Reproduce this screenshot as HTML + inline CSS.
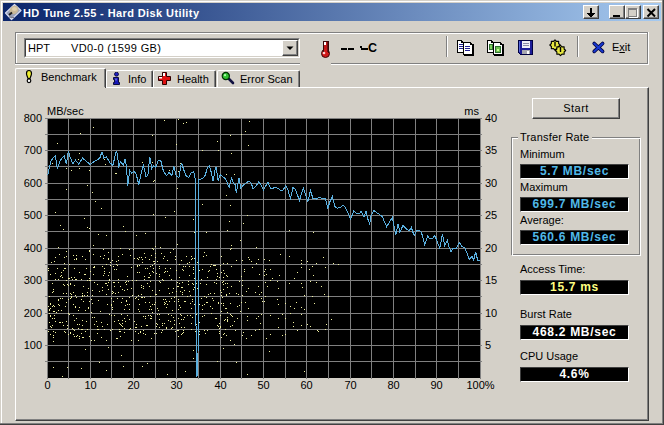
<!DOCTYPE html>
<html><head><meta charset="utf-8"><style>
html,body{margin:0;padding:0;}
body{width:664px;height:425px;overflow:hidden;position:relative;background:#D4D0C8;font-family:"Liberation Sans",sans-serif;font-size:11px;color:#000}
.t{position:absolute;white-space:pre;}
</style></head><body>
<div style="position:absolute;left:0px;top:0px;width:664px;height:425px;background:#D4D0C8;"></div><div style="position:absolute;left:1px;top:1px;width:661px;height:1px;background:#fff;"></div><div style="position:absolute;left:1px;top:1px;width:1px;height:422px;background:#fff;"></div><div style="position:absolute;left:662px;top:0px;width:1px;height:424px;background:#808080;"></div><div style="position:absolute;left:0px;top:423px;width:663px;height:1px;background:#808080;"></div><div style="position:absolute;left:663px;top:0px;width:1px;height:425px;background:#404040;"></div><div style="position:absolute;left:0px;top:424px;width:664px;height:1px;background:#404040;"></div><div style="position:absolute;left:3px;top:3px;width:658px;height:18px;background:linear-gradient(to right,#0A246A,#A6CAF0);"></div><div class="t" style="left:23px;top:4px;color:#fff;font-weight:bold;letter-spacing:0.4px;line-height:18px">HD Tune 2.55 - Hard Disk Utility</div><div style="position:absolute;left:583px;top:5px;width:16px;height:14px;background:#D4D0C8;box-sizing:border-box;border-top:1px solid #fff;border-left:1px solid #fff;border-right:1px solid #404040;border-bottom:1px solid #404040;"><div style="position:absolute;left:0;top:0;right:0;bottom:0;border-right:1px solid #808080;border-bottom:1px solid #808080;"></div><svg style="position:absolute;left:0;top:0" width="16" height="14" shape-rendering="crispEdges"><rect x="6" y="2" width="2" height="9" fill="#000"/><rect x="3" y="7" width="8" height="1" fill="#000"/><rect x="4" y="8" width="6" height="1" fill="#000"/><rect x="5" y="9" width="4" height="1" fill="#000"/></svg></div><div style="position:absolute;left:609px;top:5px;width:16px;height:14px;background:#D4D0C8;box-sizing:border-box;border-top:1px solid #fff;border-left:1px solid #fff;border-right:1px solid #404040;border-bottom:1px solid #404040;"><div style="position:absolute;left:0;top:0;right:0;bottom:0;border-right:1px solid #808080;border-bottom:1px solid #808080;"></div><svg style="position:absolute;left:0;top:0" width="16" height="14" shape-rendering="crispEdges"><rect x="3" y="9" width="7" height="2" fill="#000"/></svg></div><div style="position:absolute;left:625px;top:5px;width:16px;height:14px;background:#D4D0C8;box-sizing:border-box;border-top:1px solid #fff;border-left:1px solid #fff;border-right:1px solid #404040;border-bottom:1px solid #404040;"><div style="position:absolute;left:0;top:0;right:0;bottom:0;border-right:1px solid #808080;border-bottom:1px solid #808080;"></div><svg style="position:absolute;left:0;top:0" width="16" height="14" shape-rendering="crispEdges"><rect x="11" y="3" width="1" height="9" fill="#fff"/><rect x="3" y="11" width="9" height="1" fill="#fff"/><rect x="2.5" y="2.5" width="8" height="8" fill="none" stroke="#808080"/><rect x="3" y="3" width="7" height="1" fill="#808080"/></svg></div><div style="position:absolute;left:643px;top:5px;width:16px;height:14px;background:#D4D0C8;box-sizing:border-box;border-top:1px solid #fff;border-left:1px solid #fff;border-right:1px solid #404040;border-bottom:1px solid #404040;"><div style="position:absolute;left:0;top:0;right:0;bottom:0;border-right:1px solid #808080;border-bottom:1px solid #808080;"></div><svg style="position:absolute;left:0;top:0" width="16" height="14"><path d="M3.5 3 L11 10.5 M11 3 L3.5 10.5" stroke="#000" stroke-width="2"/></svg></div><svg style="position:absolute;left:0px;top:0px" width="24" height="22">
<path d="M5.5 13 L14.5 4.5 L21 10.5 L11.5 19.5 Z" fill="#98a0b8" stroke="#d8dcf0" stroke-width="1.2" stroke-linejoin="round"/>
<ellipse cx="14" cy="10" rx="4.8" ry="3.8" transform="rotate(-40 14 10)" fill="#c8b898"/>
<ellipse cx="14.5" cy="9" rx="2.5" ry="2" fill="#e0d0b0"/>
<path d="M9 15 L12 12.5" stroke="#202020" stroke-width="2"/>
<path d="M9 17 L14 17.5" stroke="#707080" stroke-width="1"/>
</svg><div style="position:absolute;left:15px;top:32px;width:633px;height:1px;background:#808080;"></div><div style="position:absolute;left:16px;top:33px;width:633px;height:1px;background:#fff;"></div><div style="position:absolute;left:15px;top:32px;width:1px;height:32px;background:#808080;"></div><div style="position:absolute;left:16px;top:33px;width:1px;height:31px;background:#fff;"></div><div style="position:absolute;left:647px;top:32px;width:1px;height:32px;background:#808080;"></div><div style="position:absolute;left:648px;top:32px;width:1px;height:33px;background:#fff;"></div><div style="position:absolute;left:15px;top:63px;width:285px;height:1px;background:#808080;"></div><div style="position:absolute;left:15px;top:64px;width:285px;height:1px;background:#fff;"></div><div style="position:absolute;left:331px;top:63px;width:317px;height:1px;background:#808080;"></div><div style="position:absolute;left:331px;top:64px;width:318px;height:1px;background:#fff;"></div><div style="position:absolute;left:24px;top:38px;width:276px;height:20px;background:#fff;box-sizing:border-box;border-top:1px solid #808080;border-left:1px solid #808080;border-right:1px solid #fff;border-bottom:1px solid #fff"></div><div style="position:absolute;left:25px;top:39px;width:274px;height:18px;background:transparent;box-sizing:border-box;border-top:1px solid #404040;border-left:1px solid #404040;border-right:1px solid #D4D0C8;border-bottom:1px solid #D4D0C8"></div><div class="t" style="left:28px;top:39px;line-height:18px">HPT</div><div class="t" style="left:71px;top:39px;line-height:18px;letter-spacing:0.35px">VD0-0 (1599 GB)</div><div style="position:absolute;left:282px;top:40px;width:16px;height:16px;background:#D4D0C8;box-sizing:border-box;border-top:1px solid #fff;border-left:1px solid #fff;border-right:1px solid #404040;border-bottom:1px solid #404040"><div style="position:absolute;left:0;top:0;right:0;bottom:0;border-right:1px solid #808080;border-bottom:1px solid #808080"></div><svg style="position:absolute;left:0;top:0" width="16" height="16"><path d="M3.5 5.5 L10.5 5.5 L7 9 Z" fill="#000"/></svg></div><svg style="position:absolute;left:318px;top:38px" width="16" height="22">
<circle cx="7.5" cy="15.5" r="4" fill="#d01818" stroke="#3a0808"/>
<rect x="5.5" y="3.5" width="5" height="11" fill="#c01818" stroke="#3a0808"/>
<rect x="6" y="11" width="4" height="5" fill="#d01818"/>
<rect x="6" y="4" width="2" height="3" fill="#fff"/>
<rect x="9" y="4" width="1" height="10" fill="#701010"/>
<circle cx="6" cy="15" r="1.3" fill="#ffd0d0"/>
</svg><svg style="position:absolute;left:338px;top:40px" width="44" height="16">
<rect x="3" y="8" width="6" height="2" fill="#000"/><rect x="10" y="8" width="6" height="2" fill="#000"/>
<rect x="22" y="6" width="2" height="2" fill="#000"/><rect x="23" y="8" width="7" height="2" fill="#000"/>
</svg><div class="t" style="left:368px;top:38px;font-weight:bold;font-size:12.5px;line-height:20px">C</div><div style="position:absolute;left:446px;top:36px;width:1px;height:21px;background:#808080;"></div><div style="position:absolute;left:447px;top:36px;width:1px;height:21px;background:#fff;"></div><div style="position:absolute;left:577px;top:36px;width:1px;height:21px;background:#808080;"></div><div style="position:absolute;left:578px;top:36px;width:1px;height:21px;background:#fff;"></div><svg style="position:absolute;left:456px;top:39px" width="20" height="18" shape-rendering="crispEdges"><path d="M1.5 1.5 H5.5 L7.5 3.5 V13.5 H1.5 Z" fill="#fff" stroke="#000"/><path d="M5.5 1.5 V3.5 H7.5" fill="none" stroke="#000"/><rect x="3" y="5" width="4" height="1" fill="#202090"/><rect x="3" y="7" width="4" height="1" fill="#202090"/><rect x="3" y="9" width="4" height="1" fill="#202090"/><path d="M7.5 3.5 H14.5 L16.5 5.5 V15.5 H7.5 Z" fill="#fff" stroke="#000"/><path d="M14.5 3.5 V5.5 H16.5" fill="none" stroke="#000"/><rect x="9" y="7" width="5" height="1" fill="#202090"/><rect x="9" y="9" width="5" height="1" fill="#202090"/><rect x="9" y="11" width="5" height="1" fill="#202090"/><rect x="17" y="5" width="1" height="11" fill="#000"/><rect x="8" y="16" width="10" height="1" fill="#000"/></svg><svg style="position:absolute;left:486px;top:39px" width="20" height="18" shape-rendering="crispEdges"><path d="M1.5 1.5 H5.5 L7.5 3.5 V13.5 H1.5 Z" fill="#fff" stroke="#000"/><path d="M5.5 1.5 V3.5 H7.5" fill="none" stroke="#000"/><rect x="3" y="5" width="4" height="6" fill="#307030"/><rect x="4" y="6" width="2" height="4" fill="#80d060"/><path d="M7.5 3.5 H14.5 L16.5 5.5 V15.5 H7.5 Z" fill="#fff" stroke="#000"/><path d="M14.5 3.5 V5.5 H16.5" fill="none" stroke="#000"/><rect x="9" y="7" width="6" height="7" fill="#307030"/><rect x="10" y="8" width="4" height="5" fill="#70c050"/><rect x="11" y="10" width="2" height="2" fill="#c0ff90"/><rect x="17" y="5" width="1" height="11" fill="#000"/><rect x="8" y="16" width="10" height="1" fill="#000"/></svg><svg style="position:absolute;left:517px;top:39px" width="18" height="18" shape-rendering="crispEdges">
<path d="M1.5 1.5 H15.5 V15.5 H3.5 L1.5 13.5 Z" fill="#1c1c98" stroke="#000040"/>
<rect x="2" y="2" width="1" height="11" fill="#5868d8"/>
<rect x="5" y="2" width="8" height="7" fill="#eeeef8"/>
<rect x="6" y="4" width="6" height="1" fill="#8888a8"/><rect x="6" y="6" width="6" height="1" fill="#8888a8"/>
<rect x="5" y="11" width="8" height="4" fill="#a8a8b0"/><rect x="10" y="12" width="2" height="3" fill="#fff"/>
</svg><svg style="position:absolute;left:548px;top:39px" width="20" height="18">
<path d="M12.20,6.00 L10.60,7.49 L10.68,9.68 L8.49,9.60 L7.00,11.20 L5.51,9.60 L3.32,9.68 L3.40,7.49 L1.80,6.00 L3.40,4.51 L3.32,2.32 L5.51,2.40 L7.00,0.80 L8.49,2.40 L10.68,2.32 L10.60,4.51 Z" fill="#e8e840" stroke="#000" stroke-width="1.1" stroke-linejoin="round"/>
<path d="M7 2.5 V7.5" stroke="#000" stroke-width="1.4"/>
<path d="M17.70,11.50 L16.10,12.99 L16.18,15.18 L13.99,15.10 L12.50,16.70 L11.01,15.10 L8.82,15.18 L8.90,12.99 L7.30,11.50 L8.90,10.01 L8.82,7.82 L11.01,7.90 L12.50,6.30 L13.99,7.90 L16.18,7.82 L16.10,10.01 Z" fill="#e8e840" stroke="#000" stroke-width="1.1" stroke-linejoin="round"/>
<path d="M12.5 8 V13" stroke="#000" stroke-width="1.4"/>
</svg><svg style="position:absolute;left:590px;top:40px" width="16" height="15">
<path d="M4.2 3.5 L12.6 11.4 M12.6 3.5 L4.2 11.4" stroke="#000040" stroke-width="3.6" stroke-linecap="round"/>
<path d="M4.2 3.5 L12.6 11.4 M12.6 3.5 L4.2 11.4" stroke="#1838d0" stroke-width="2" stroke-linecap="round"/>
</svg><div class="t" style="left:612px;top:40px;line-height:14px">E<span style="text-decoration:underline">x</span>it</div><div style="position:absolute;left:15px;top:87px;width:634px;height:334px;background:#D4D0C8;box-sizing:border-box;border-top:1px solid #fff;border-left:1px solid #fff;border-right:1px solid #404040;border-bottom:1px solid #404040"></div><div style="position:absolute;left:16px;top:88px;width:632px;height:332px;background:transparent;box-sizing:border-box;border-right:1px solid #808080;border-bottom:1px solid #808080"></div><div style="position:absolute;left:106px;top:70px;width:47px;height:17px;background:#D4D0C8;box-sizing:border-box;border-top:1px solid #fff;border-left:1px solid #fff;border-right:1px solid #404040;border-top-left-radius:2px;border-top-right-radius:2px"></div><div style="position:absolute;left:151px;top:71px;width:1px;height:16px;background:#808080;"></div><div style="position:absolute;left:153px;top:70px;width:63px;height:17px;background:#D4D0C8;box-sizing:border-box;border-top:1px solid #fff;border-left:1px solid #fff;border-right:1px solid #404040;border-top-left-radius:2px;border-top-right-radius:2px"></div><div style="position:absolute;left:214px;top:71px;width:1px;height:16px;background:#808080;"></div><div style="position:absolute;left:217px;top:70px;width:83px;height:17px;background:#D4D0C8;box-sizing:border-box;border-top:1px solid #fff;border-left:1px solid #fff;border-right:1px solid #404040;border-top-left-radius:2px;border-top-right-radius:2px"></div><div style="position:absolute;left:298px;top:71px;width:1px;height:16px;background:#808080;"></div><div style="position:absolute;left:15px;top:68px;width:91px;height:20px;background:#D4D0C8;box-sizing:border-box;border-top:1px solid #fff;border-left:1px solid #fff;border-right:1px solid #404040;border-top-left-radius:2px;border-top-right-radius:2px"></div><div style="position:absolute;left:104px;top:69px;width:1px;height:19px;background:#808080;"></div><div style="position:absolute;left:16px;top:87px;width:89px;height:1px;background:#D4D0C8;"></div><div class="t" style="left:41px;top:71px;line-height:13px">Benchmark</div><div class="t" style="left:128px;top:73px;line-height:13px">Info</div><div class="t" style="left:177px;top:73px;line-height:13px">Health</div><div class="t" style="left:240px;top:73px;line-height:13px">Error Scan</div><svg style="position:absolute;left:24px;top:69px" width="10" height="15">
<path d="M5 1.5 C7 1.5 7.5 3 7.5 4.5 C7.5 6.5 6.5 7.5 6 9.5 H4 C3.5 7.5 2.5 6.5 2.5 4.5 C2.5 3 3 1.5 5 1.5 Z" fill="#f0f030" stroke="#000" stroke-width="1.2"/>
<circle cx="5" cy="11.8" r="1.8" fill="#fff" stroke="#000" stroke-width="1.2"/>
</svg><svg style="position:absolute;left:112px;top:72px" width="10" height="14">
<circle cx="4.5" cy="2.2" r="2" fill="#2020c0" stroke="#000030" stroke-width="0.8"/>
<path d="M1.5 5.5 H6.5 V10.5 H7.5 V12.5 H1.5 V10.5 H2.5 V7.5 H1.5 Z" fill="#1818b8" stroke="#000030" stroke-width="0.9"/>
<rect x="3.5" y="6.5" width="1" height="2" fill="#a0a0ff"/>
</svg><svg style="position:absolute;left:158px;top:72px" width="14" height="14">
<path d="M4.5 0.5 H8.5 V4.5 H12.5 V8.5 H8.5 V12.5 H4.5 V8.5 H0.5 V4.5 H4.5 Z" fill="#e01010" stroke="#300000"/>
<rect x="5" y="1" width="2" height="3" fill="#fff"/><rect x="1" y="5" width="3" height="1.5" fill="#fff"/>
</svg><svg style="position:absolute;left:221px;top:71px" width="15" height="15">
<path d="M6.5 6.5 L12 12" stroke="#101040" stroke-width="2.6" stroke-linecap="round"/>
<circle cx="4.8" cy="5" r="3.6" fill="#30c030" stroke="#003000" stroke-width="1.2"/>
<circle cx="4" cy="4.2" r="1.1" fill="#b0ffb0"/>
</svg><svg style="position:absolute;left:0;top:0" width="664" height="425"><rect x="47" y="118" width="433" height="260" fill="#000" shape-rendering="crispEdges"/><g fill="#808080" shape-rendering="crispEdges"><rect x="45" y="118" width="437" height="1"/><rect x="45" y="134" width="437" height="1"/><rect x="45" y="150" width="437" height="1"/><rect x="45" y="166" width="437" height="1"/><rect x="45" y="183" width="437" height="1"/><rect x="45" y="199" width="437" height="1"/><rect x="45" y="215" width="437" height="1"/><rect x="45" y="231" width="437" height="1"/><rect x="45" y="248" width="437" height="1"/><rect x="45" y="264" width="437" height="1"/><rect x="45" y="280" width="437" height="1"/><rect x="45" y="296" width="437" height="1"/><rect x="45" y="313" width="437" height="1"/><rect x="45" y="329" width="437" height="1"/><rect x="45" y="345" width="437" height="1"/><rect x="45" y="361" width="437" height="1"/><rect x="47" y="118" width="1" height="261"/><rect x="68" y="118" width="1" height="261"/><rect x="90" y="118" width="1" height="261"/><rect x="111" y="118" width="1" height="261"/><rect x="133" y="118" width="1" height="261"/><rect x="155" y="118" width="1" height="261"/><rect x="176" y="118" width="1" height="261"/><rect x="198" y="118" width="1" height="261"/><rect x="220" y="118" width="1" height="261"/><rect x="241" y="118" width="1" height="261"/><rect x="263" y="118" width="1" height="261"/><rect x="285" y="118" width="1" height="261"/><rect x="306" y="118" width="1" height="261"/><rect x="328" y="118" width="1" height="261"/><rect x="350" y="118" width="1" height="261"/><rect x="371" y="118" width="1" height="261"/><rect x="393" y="118" width="1" height="261"/><rect x="415" y="118" width="1" height="261"/><rect x="436" y="118" width="1" height="261"/><rect x="458" y="118" width="1" height="261"/><rect x="480" y="118" width="1" height="261"/></g><g fill="#F0F0A0" shape-rendering="crispEdges"><rect x="178" y="119" width="1" height="1"/><rect x="164" y="120" width="1" height="1"/><rect x="249" y="121" width="1" height="1"/><rect x="186" y="122" width="1" height="1"/><rect x="183" y="123" width="1" height="1"/><rect x="93" y="127" width="1" height="1"/><rect x="245" y="131" width="1" height="1"/><rect x="80" y="133" width="1" height="1"/><rect x="241" y="134" width="1" height="1"/><rect x="152" y="135" width="1" height="1"/><rect x="230" y="135" width="1" height="1"/><rect x="217" y="141" width="1" height="1"/><rect x="57" y="143" width="1" height="1"/><rect x="176" y="144" width="1" height="1"/><rect x="248" y="145" width="1" height="1"/><rect x="202" y="150" width="1" height="1"/><rect x="218" y="150" width="1" height="1"/><rect x="79" y="153" width="1" height="1"/><rect x="231" y="153" width="1" height="1"/><rect x="52" y="159" width="1" height="1"/><rect x="78" y="159" width="1" height="1"/><rect x="104" y="159" width="1" height="1"/><rect x="142" y="162" width="1" height="1"/><rect x="152" y="162" width="1" height="1"/><rect x="52" y="163" width="1" height="1"/><rect x="180" y="163" width="1" height="1"/><rect x="105" y="164" width="1" height="1"/><rect x="66" y="168" width="1" height="1"/><rect x="79" y="168" width="1" height="1"/><rect x="71" y="170" width="1" height="1"/><rect x="89" y="170" width="1" height="1"/><rect x="169" y="170" width="1" height="1"/><rect x="178" y="171" width="1" height="1"/><rect x="115" y="173" width="1" height="1"/><rect x="116" y="173" width="1" height="1"/><rect x="226" y="174" width="1" height="1"/><rect x="234" y="174" width="1" height="1"/><rect x="127" y="177" width="1" height="1"/><rect x="154" y="180" width="1" height="1"/><rect x="153" y="181" width="1" height="1"/><rect x="87" y="185" width="1" height="1"/><rect x="177" y="188" width="1" height="1"/><rect x="66" y="189" width="1" height="1"/><rect x="92" y="192" width="1" height="1"/><rect x="226" y="195" width="1" height="1"/><rect x="95" y="201" width="1" height="1"/><rect x="202" y="204" width="1" height="1"/><rect x="230" y="205" width="1" height="1"/><rect x="101" y="208" width="1" height="1"/><rect x="174" y="211" width="1" height="1"/><rect x="55" y="212" width="1" height="1"/><rect x="153" y="214" width="1" height="1"/><rect x="247" y="215" width="1" height="1"/><rect x="165" y="217" width="1" height="1"/><rect x="84" y="218" width="1" height="1"/><rect x="193" y="219" width="1" height="1"/><rect x="229" y="221" width="1" height="1"/><rect x="243" y="223" width="1" height="1"/><rect x="60" y="225" width="1" height="1"/><rect x="123" y="226" width="1" height="1"/><rect x="87" y="227" width="1" height="1"/><rect x="89" y="228" width="1" height="1"/><rect x="63" y="229" width="1" height="1"/><rect x="227" y="230" width="1" height="1"/><rect x="289" y="230" width="1" height="1"/><rect x="125" y="231" width="1" height="1"/><rect x="194" y="232" width="1" height="1"/><rect x="206" y="232" width="1" height="1"/><rect x="313" y="232" width="1" height="1"/><rect x="145" y="233" width="1" height="1"/><rect x="98" y="234" width="1" height="1"/><rect x="106" y="235" width="1" height="1"/><rect x="136" y="235" width="1" height="1"/><rect x="240" y="240" width="1" height="1"/><rect x="177" y="244" width="1" height="1"/><rect x="93" y="245" width="1" height="1"/><rect x="231" y="245" width="1" height="1"/><rect x="155" y="246" width="1" height="1"/><rect x="58" y="247" width="1" height="1"/><rect x="160" y="247" width="1" height="1"/><rect x="256" y="247" width="1" height="1"/><rect x="120" y="248" width="1" height="1"/><rect x="152" y="248" width="1" height="1"/><rect x="195" y="248" width="1" height="1"/><rect x="231" y="248" width="1" height="1"/><rect x="103" y="249" width="1" height="1"/><rect x="129" y="249" width="1" height="1"/><rect x="133" y="249" width="1" height="1"/><rect x="153" y="249" width="1" height="1"/><rect x="173" y="249" width="1" height="1"/><rect x="230" y="249" width="1" height="1"/><rect x="89" y="250" width="1" height="1"/><rect x="66" y="251" width="1" height="1"/><rect x="89" y="251" width="1" height="1"/><rect x="108" y="252" width="1" height="1"/><rect x="170" y="252" width="1" height="1"/><rect x="204" y="252" width="1" height="1"/><rect x="144" y="253" width="1" height="1"/><rect x="155" y="253" width="1" height="1"/><rect x="161" y="253" width="1" height="1"/><rect x="59" y="254" width="1" height="1"/><rect x="93" y="254" width="1" height="1"/><rect x="122" y="254" width="1" height="1"/><rect x="280" y="254" width="1" height="1"/><rect x="73" y="255" width="1" height="1"/><rect x="76" y="255" width="1" height="1"/><rect x="104" y="255" width="1" height="1"/><rect x="130" y="255" width="1" height="1"/><rect x="151" y="255" width="1" height="1"/><rect x="206" y="255" width="1" height="1"/><rect x="66" y="256" width="1" height="1"/><rect x="82" y="256" width="1" height="1"/><rect x="100" y="256" width="1" height="1"/><rect x="118" y="256" width="1" height="1"/><rect x="164" y="256" width="1" height="1"/><rect x="175" y="256" width="1" height="1"/><rect x="186" y="256" width="1" height="1"/><rect x="191" y="256" width="1" height="1"/><rect x="203" y="256" width="1" height="1"/><rect x="221" y="256" width="1" height="1"/><rect x="289" y="256" width="1" height="1"/><rect x="55" y="257" width="1" height="1"/><rect x="64" y="257" width="1" height="1"/><rect x="139" y="257" width="1" height="1"/><rect x="141" y="257" width="1" height="1"/><rect x="145" y="257" width="1" height="1"/><rect x="155" y="257" width="1" height="1"/><rect x="198" y="257" width="1" height="1"/><rect x="248" y="257" width="1" height="1"/><rect x="323" y="257" width="1" height="1"/><rect x="76" y="258" width="1" height="1"/><rect x="103" y="258" width="1" height="1"/><rect x="108" y="258" width="1" height="1"/><rect x="134" y="258" width="1" height="1"/><rect x="137" y="258" width="1" height="1"/><rect x="163" y="258" width="1" height="1"/><rect x="192" y="258" width="1" height="1"/><rect x="194" y="258" width="1" height="1"/><rect x="74" y="259" width="1" height="1"/><rect x="76" y="259" width="1" height="1"/><rect x="85" y="259" width="1" height="1"/><rect x="108" y="259" width="1" height="1"/><rect x="138" y="259" width="1" height="1"/><rect x="142" y="259" width="1" height="1"/><rect x="149" y="259" width="1" height="1"/><rect x="175" y="259" width="1" height="1"/><rect x="191" y="259" width="1" height="1"/><rect x="249" y="259" width="1" height="1"/><rect x="258" y="259" width="1" height="1"/><rect x="264" y="259" width="1" height="1"/><rect x="112" y="260" width="1" height="1"/><rect x="118" y="260" width="1" height="1"/><rect x="167" y="260" width="1" height="1"/><rect x="181" y="260" width="1" height="1"/><rect x="236" y="260" width="1" height="1"/><rect x="242" y="260" width="1" height="1"/><rect x="269" y="260" width="1" height="1"/><rect x="301" y="260" width="1" height="1"/><rect x="54" y="261" width="1" height="1"/><rect x="116" y="261" width="1" height="1"/><rect x="153" y="261" width="1" height="1"/><rect x="154" y="261" width="1" height="1"/><rect x="157" y="261" width="1" height="1"/><rect x="251" y="261" width="1" height="1"/><rect x="307" y="261" width="1" height="1"/><rect x="51" y="262" width="1" height="1"/><rect x="110" y="262" width="1" height="1"/><rect x="142" y="262" width="1" height="1"/><rect x="189" y="262" width="1" height="1"/><rect x="197" y="262" width="1" height="1"/><rect x="64" y="263" width="1" height="1"/><rect x="154" y="263" width="1" height="1"/><rect x="187" y="263" width="1" height="1"/><rect x="198" y="263" width="1" height="1"/><rect x="223" y="263" width="1" height="1"/><rect x="227" y="263" width="1" height="1"/><rect x="256" y="263" width="1" height="1"/><rect x="301" y="263" width="1" height="1"/><rect x="316" y="263" width="1" height="1"/><rect x="333" y="263" width="1" height="1"/><rect x="69" y="264" width="1" height="1"/><rect x="106" y="264" width="1" height="1"/><rect x="116" y="264" width="1" height="1"/><rect x="179" y="264" width="1" height="1"/><rect x="211" y="264" width="1" height="1"/><rect x="338" y="264" width="1" height="1"/><rect x="110" y="265" width="1" height="1"/><rect x="117" y="265" width="1" height="1"/><rect x="137" y="265" width="1" height="1"/><rect x="139" y="265" width="1" height="1"/><rect x="152" y="265" width="1" height="1"/><rect x="213" y="265" width="1" height="1"/><rect x="214" y="265" width="1" height="1"/><rect x="215" y="265" width="1" height="1"/><rect x="220" y="265" width="1" height="1"/><rect x="94" y="266" width="1" height="1"/><rect x="102" y="266" width="1" height="1"/><rect x="113" y="266" width="1" height="1"/><rect x="137" y="266" width="1" height="1"/><rect x="150" y="266" width="1" height="1"/><rect x="159" y="266" width="1" height="1"/><rect x="183" y="266" width="1" height="1"/><rect x="185" y="266" width="1" height="1"/><rect x="189" y="266" width="1" height="1"/><rect x="195" y="266" width="1" height="1"/><rect x="210" y="266" width="1" height="1"/><rect x="231" y="266" width="1" height="1"/><rect x="312" y="266" width="1" height="1"/><rect x="93" y="267" width="1" height="1"/><rect x="94" y="267" width="1" height="1"/><rect x="131" y="267" width="1" height="1"/><rect x="193" y="267" width="1" height="1"/><rect x="198" y="267" width="1" height="1"/><rect x="252" y="267" width="1" height="1"/><rect x="301" y="267" width="1" height="1"/><rect x="325" y="267" width="1" height="1"/><rect x="48" y="268" width="1" height="1"/><rect x="57" y="268" width="1" height="1"/><rect x="64" y="268" width="1" height="1"/><rect x="65" y="268" width="1" height="1"/><rect x="74" y="268" width="1" height="1"/><rect x="86" y="268" width="1" height="1"/><rect x="104" y="268" width="1" height="1"/><rect x="145" y="268" width="1" height="1"/><rect x="147" y="268" width="1" height="1"/><rect x="153" y="268" width="1" height="1"/><rect x="159" y="268" width="1" height="1"/><rect x="165" y="268" width="1" height="1"/><rect x="170" y="268" width="1" height="1"/><rect x="114" y="269" width="1" height="1"/><rect x="116" y="269" width="1" height="1"/><rect x="182" y="269" width="1" height="1"/><rect x="193" y="269" width="1" height="1"/><rect x="202" y="269" width="1" height="1"/><rect x="216" y="269" width="1" height="1"/><rect x="244" y="269" width="1" height="1"/><rect x="265" y="269" width="1" height="1"/><rect x="270" y="269" width="1" height="1"/><rect x="309" y="269" width="1" height="1"/><rect x="48" y="270" width="1" height="1"/><rect x="63" y="270" width="1" height="1"/><rect x="176" y="270" width="1" height="1"/><rect x="183" y="270" width="1" height="1"/><rect x="199" y="270" width="1" height="1"/><rect x="209" y="270" width="1" height="1"/><rect x="223" y="270" width="1" height="1"/><rect x="90" y="271" width="1" height="1"/><rect x="104" y="271" width="1" height="1"/><rect x="152" y="271" width="1" height="1"/><rect x="165" y="271" width="1" height="1"/><rect x="167" y="271" width="1" height="1"/><rect x="198" y="271" width="1" height="1"/><rect x="208" y="271" width="1" height="1"/><rect x="244" y="271" width="1" height="1"/><rect x="264" y="271" width="1" height="1"/><rect x="61" y="272" width="1" height="1"/><rect x="79" y="272" width="1" height="1"/><rect x="109" y="272" width="1" height="1"/><rect x="137" y="272" width="1" height="1"/><rect x="139" y="272" width="1" height="1"/><rect x="153" y="272" width="1" height="1"/><rect x="164" y="272" width="1" height="1"/><rect x="221" y="272" width="1" height="1"/><rect x="297" y="272" width="1" height="1"/><rect x="55" y="273" width="1" height="1"/><rect x="104" y="273" width="1" height="1"/><rect x="149" y="273" width="1" height="1"/><rect x="156" y="273" width="1" height="1"/><rect x="193" y="273" width="1" height="1"/><rect x="217" y="273" width="1" height="1"/><rect x="224" y="273" width="1" height="1"/><rect x="50" y="274" width="1" height="1"/><rect x="84" y="274" width="1" height="1"/><rect x="85" y="274" width="1" height="1"/><rect x="93" y="274" width="1" height="1"/><rect x="159" y="274" width="1" height="1"/><rect x="259" y="274" width="1" height="1"/><rect x="266" y="274" width="1" height="1"/><rect x="61" y="275" width="1" height="1"/><rect x="103" y="275" width="1" height="1"/><rect x="108" y="275" width="1" height="1"/><rect x="150" y="275" width="1" height="1"/><rect x="169" y="275" width="1" height="1"/><rect x="189" y="275" width="1" height="1"/><rect x="226" y="275" width="1" height="1"/><rect x="264" y="275" width="1" height="1"/><rect x="279" y="275" width="1" height="1"/><rect x="313" y="275" width="1" height="1"/><rect x="60" y="276" width="1" height="1"/><rect x="127" y="276" width="1" height="1"/><rect x="144" y="276" width="1" height="1"/><rect x="159" y="276" width="1" height="1"/><rect x="195" y="276" width="1" height="1"/><rect x="217" y="276" width="1" height="1"/><rect x="227" y="276" width="1" height="1"/><rect x="241" y="276" width="1" height="1"/><rect x="62" y="277" width="1" height="1"/><rect x="71" y="277" width="1" height="1"/><rect x="74" y="277" width="1" height="1"/><rect x="148" y="277" width="1" height="1"/><rect x="149" y="277" width="1" height="1"/><rect x="179" y="277" width="1" height="1"/><rect x="207" y="277" width="1" height="1"/><rect x="219" y="277" width="1" height="1"/><rect x="223" y="277" width="1" height="1"/><rect x="68" y="278" width="1" height="1"/><rect x="69" y="278" width="1" height="1"/><rect x="89" y="278" width="1" height="1"/><rect x="194" y="278" width="1" height="1"/><rect x="272" y="278" width="1" height="1"/><rect x="294" y="278" width="1" height="1"/><rect x="55" y="279" width="1" height="1"/><rect x="58" y="279" width="1" height="1"/><rect x="72" y="279" width="1" height="1"/><rect x="75" y="279" width="1" height="1"/><rect x="76" y="279" width="1" height="1"/><rect x="81" y="279" width="1" height="1"/><rect x="109" y="279" width="1" height="1"/><rect x="118" y="279" width="1" height="1"/><rect x="144" y="279" width="1" height="1"/><rect x="162" y="279" width="1" height="1"/><rect x="171" y="279" width="1" height="1"/><rect x="201" y="279" width="1" height="1"/><rect x="216" y="279" width="1" height="1"/><rect x="66" y="280" width="1" height="1"/><rect x="87" y="280" width="1" height="1"/><rect x="89" y="280" width="1" height="1"/><rect x="90" y="280" width="1" height="1"/><rect x="109" y="280" width="1" height="1"/><rect x="132" y="280" width="1" height="1"/><rect x="136" y="280" width="1" height="1"/><rect x="163" y="280" width="1" height="1"/><rect x="195" y="280" width="1" height="1"/><rect x="242" y="280" width="1" height="1"/><rect x="270" y="280" width="1" height="1"/><rect x="126" y="281" width="1" height="1"/><rect x="128" y="281" width="1" height="1"/><rect x="150" y="281" width="1" height="1"/><rect x="159" y="281" width="1" height="1"/><rect x="188" y="281" width="1" height="1"/><rect x="223" y="281" width="1" height="1"/><rect x="239" y="281" width="1" height="1"/><rect x="277" y="281" width="1" height="1"/><rect x="310" y="281" width="1" height="1"/><rect x="94" y="282" width="1" height="1"/><rect x="108" y="282" width="1" height="1"/><rect x="113" y="282" width="1" height="1"/><rect x="114" y="282" width="1" height="1"/><rect x="118" y="282" width="1" height="1"/><rect x="125" y="282" width="1" height="1"/><rect x="160" y="282" width="1" height="1"/><rect x="177" y="282" width="1" height="1"/><rect x="182" y="282" width="1" height="1"/><rect x="214" y="282" width="1" height="1"/><rect x="222" y="282" width="1" height="1"/><rect x="265" y="282" width="1" height="1"/><rect x="316" y="282" width="1" height="1"/><rect x="52" y="283" width="1" height="1"/><rect x="70" y="283" width="1" height="1"/><rect x="105" y="283" width="1" height="1"/><rect x="106" y="283" width="1" height="1"/><rect x="147" y="283" width="1" height="1"/><rect x="179" y="283" width="1" height="1"/><rect x="192" y="283" width="1" height="1"/><rect x="196" y="283" width="1" height="1"/><rect x="200" y="283" width="1" height="1"/><rect x="216" y="283" width="1" height="1"/><rect x="225" y="283" width="1" height="1"/><rect x="227" y="283" width="1" height="1"/><rect x="289" y="283" width="1" height="1"/><rect x="301" y="283" width="1" height="1"/><rect x="63" y="284" width="1" height="1"/><rect x="67" y="284" width="1" height="1"/><rect x="70" y="284" width="1" height="1"/><rect x="97" y="284" width="1" height="1"/><rect x="126" y="284" width="1" height="1"/><rect x="188" y="284" width="1" height="1"/><rect x="193" y="284" width="1" height="1"/><rect x="206" y="284" width="1" height="1"/><rect x="223" y="284" width="1" height="1"/><rect x="64" y="285" width="1" height="1"/><rect x="68" y="285" width="1" height="1"/><rect x="74" y="285" width="1" height="1"/><rect x="107" y="285" width="1" height="1"/><rect x="141" y="285" width="1" height="1"/><rect x="242" y="285" width="1" height="1"/><rect x="83" y="286" width="1" height="1"/><rect x="114" y="286" width="1" height="1"/><rect x="120" y="286" width="1" height="1"/><rect x="143" y="286" width="1" height="1"/><rect x="149" y="286" width="1" height="1"/><rect x="177" y="286" width="1" height="1"/><rect x="178" y="286" width="1" height="1"/><rect x="231" y="286" width="1" height="1"/><rect x="258" y="286" width="1" height="1"/><rect x="267" y="286" width="1" height="1"/><rect x="321" y="286" width="1" height="1"/><rect x="102" y="287" width="1" height="1"/><rect x="141" y="287" width="1" height="1"/><rect x="181" y="287" width="1" height="1"/><rect x="182" y="287" width="1" height="1"/><rect x="194" y="287" width="1" height="1"/><rect x="227" y="287" width="1" height="1"/><rect x="302" y="287" width="1" height="1"/><rect x="88" y="288" width="1" height="1"/><rect x="131" y="288" width="1" height="1"/><rect x="143" y="288" width="1" height="1"/><rect x="168" y="288" width="1" height="1"/><rect x="173" y="288" width="1" height="1"/><rect x="197" y="288" width="1" height="1"/><rect x="248" y="288" width="1" height="1"/><rect x="278" y="288" width="1" height="1"/><rect x="53" y="289" width="1" height="1"/><rect x="108" y="289" width="1" height="1"/><rect x="122" y="289" width="1" height="1"/><rect x="127" y="289" width="1" height="1"/><rect x="193" y="289" width="1" height="1"/><rect x="223" y="289" width="1" height="1"/><rect x="92" y="290" width="1" height="1"/><rect x="102" y="290" width="1" height="1"/><rect x="124" y="290" width="1" height="1"/><rect x="152" y="290" width="1" height="1"/><rect x="159" y="290" width="1" height="1"/><rect x="184" y="290" width="1" height="1"/><rect x="220" y="290" width="1" height="1"/><rect x="53" y="291" width="1" height="1"/><rect x="99" y="291" width="1" height="1"/><rect x="112" y="291" width="1" height="1"/><rect x="176" y="291" width="1" height="1"/><rect x="180" y="291" width="1" height="1"/><rect x="189" y="291" width="1" height="1"/><rect x="246" y="291" width="1" height="1"/><rect x="52" y="292" width="1" height="1"/><rect x="73" y="292" width="1" height="1"/><rect x="87" y="292" width="1" height="1"/><rect x="113" y="292" width="1" height="1"/><rect x="118" y="292" width="1" height="1"/><rect x="172" y="292" width="1" height="1"/><rect x="182" y="292" width="1" height="1"/><rect x="221" y="292" width="1" height="1"/><rect x="255" y="292" width="1" height="1"/><rect x="261" y="292" width="1" height="1"/><rect x="63" y="293" width="1" height="1"/><rect x="66" y="293" width="1" height="1"/><rect x="70" y="293" width="1" height="1"/><rect x="82" y="293" width="1" height="1"/><rect x="112" y="293" width="1" height="1"/><rect x="115" y="293" width="1" height="1"/><rect x="169" y="293" width="1" height="1"/><rect x="210" y="293" width="1" height="1"/><rect x="214" y="293" width="1" height="1"/><rect x="229" y="293" width="1" height="1"/><rect x="236" y="293" width="1" height="1"/><rect x="71" y="294" width="1" height="1"/><rect x="106" y="294" width="1" height="1"/><rect x="141" y="294" width="1" height="1"/><rect x="155" y="294" width="1" height="1"/><rect x="156" y="294" width="1" height="1"/><rect x="182" y="294" width="1" height="1"/><rect x="208" y="294" width="1" height="1"/><rect x="226" y="294" width="1" height="1"/><rect x="238" y="294" width="1" height="1"/><rect x="259" y="294" width="1" height="1"/><rect x="324" y="294" width="1" height="1"/><rect x="75" y="295" width="1" height="1"/><rect x="82" y="295" width="1" height="1"/><rect x="84" y="295" width="1" height="1"/><rect x="87" y="295" width="1" height="1"/><rect x="92" y="295" width="1" height="1"/><rect x="132" y="295" width="1" height="1"/><rect x="138" y="295" width="1" height="1"/><rect x="190" y="295" width="1" height="1"/><rect x="221" y="295" width="1" height="1"/><rect x="226" y="295" width="1" height="1"/><rect x="242" y="295" width="1" height="1"/><rect x="304" y="295" width="1" height="1"/><rect x="49" y="296" width="1" height="1"/><rect x="71" y="296" width="1" height="1"/><rect x="82" y="296" width="1" height="1"/><rect x="150" y="296" width="1" height="1"/><rect x="176" y="296" width="1" height="1"/><rect x="187" y="296" width="1" height="1"/><rect x="204" y="296" width="1" height="1"/><rect x="265" y="296" width="1" height="1"/><rect x="312" y="296" width="1" height="1"/><rect x="328" y="296" width="1" height="1"/><rect x="71" y="297" width="1" height="1"/><rect x="76" y="297" width="1" height="1"/><rect x="129" y="297" width="1" height="1"/><rect x="136" y="297" width="1" height="1"/><rect x="141" y="297" width="1" height="1"/><rect x="142" y="297" width="1" height="1"/><rect x="144" y="297" width="1" height="1"/><rect x="174" y="297" width="1" height="1"/><rect x="206" y="297" width="1" height="1"/><rect x="222" y="297" width="1" height="1"/><rect x="60" y="298" width="1" height="1"/><rect x="62" y="298" width="1" height="1"/><rect x="70" y="298" width="1" height="1"/><rect x="111" y="298" width="1" height="1"/><rect x="117" y="298" width="1" height="1"/><rect x="122" y="298" width="1" height="1"/><rect x="135" y="298" width="1" height="1"/><rect x="171" y="298" width="1" height="1"/><rect x="201" y="298" width="1" height="1"/><rect x="212" y="298" width="1" height="1"/><rect x="261" y="298" width="1" height="1"/><rect x="58" y="299" width="1" height="1"/><rect x="68" y="299" width="1" height="1"/><rect x="81" y="299" width="1" height="1"/><rect x="91" y="299" width="1" height="1"/><rect x="138" y="299" width="1" height="1"/><rect x="163" y="299" width="1" height="1"/><rect x="165" y="299" width="1" height="1"/><rect x="178" y="299" width="1" height="1"/><rect x="192" y="299" width="1" height="1"/><rect x="277" y="299" width="1" height="1"/><rect x="58" y="300" width="1" height="1"/><rect x="98" y="300" width="1" height="1"/><rect x="126" y="300" width="1" height="1"/><rect x="213" y="300" width="1" height="1"/><rect x="83" y="301" width="1" height="1"/><rect x="89" y="301" width="1" height="1"/><rect x="113" y="301" width="1" height="1"/><rect x="126" y="301" width="1" height="1"/><rect x="166" y="301" width="1" height="1"/><rect x="169" y="301" width="1" height="1"/><rect x="174" y="301" width="1" height="1"/><rect x="178" y="301" width="1" height="1"/><rect x="184" y="301" width="1" height="1"/><rect x="185" y="301" width="1" height="1"/><rect x="192" y="301" width="1" height="1"/><rect x="262" y="301" width="1" height="1"/><rect x="264" y="301" width="1" height="1"/><rect x="66" y="302" width="1" height="1"/><rect x="121" y="302" width="1" height="1"/><rect x="145" y="302" width="1" height="1"/><rect x="149" y="302" width="1" height="1"/><rect x="155" y="302" width="1" height="1"/><rect x="164" y="302" width="1" height="1"/><rect x="206" y="302" width="1" height="1"/><rect x="207" y="302" width="1" height="1"/><rect x="218" y="302" width="1" height="1"/><rect x="241" y="302" width="1" height="1"/><rect x="245" y="302" width="1" height="1"/><rect x="296" y="302" width="1" height="1"/><rect x="50" y="303" width="1" height="1"/><rect x="92" y="303" width="1" height="1"/><rect x="165" y="303" width="1" height="1"/><rect x="190" y="303" width="1" height="1"/><rect x="218" y="303" width="1" height="1"/><rect x="221" y="303" width="1" height="1"/><rect x="223" y="303" width="1" height="1"/><rect x="230" y="303" width="1" height="1"/><rect x="285" y="303" width="1" height="1"/><rect x="314" y="303" width="1" height="1"/><rect x="50" y="304" width="1" height="1"/><rect x="58" y="304" width="1" height="1"/><rect x="73" y="304" width="1" height="1"/><rect x="107" y="304" width="1" height="1"/><rect x="111" y="304" width="1" height="1"/><rect x="127" y="304" width="1" height="1"/><rect x="129" y="304" width="1" height="1"/><rect x="139" y="304" width="1" height="1"/><rect x="152" y="304" width="1" height="1"/><rect x="154" y="304" width="1" height="1"/><rect x="164" y="304" width="1" height="1"/><rect x="167" y="304" width="1" height="1"/><rect x="194" y="304" width="1" height="1"/><rect x="199" y="304" width="1" height="1"/><rect x="204" y="304" width="1" height="1"/><rect x="278" y="304" width="1" height="1"/><rect x="53" y="305" width="1" height="1"/><rect x="59" y="305" width="1" height="1"/><rect x="111" y="305" width="1" height="1"/><rect x="125" y="305" width="1" height="1"/><rect x="179" y="305" width="1" height="1"/><rect x="198" y="305" width="1" height="1"/><rect x="202" y="305" width="1" height="1"/><rect x="223" y="305" width="1" height="1"/><rect x="239" y="305" width="1" height="1"/><rect x="48" y="306" width="1" height="1"/><rect x="52" y="306" width="1" height="1"/><rect x="54" y="306" width="1" height="1"/><rect x="65" y="306" width="1" height="1"/><rect x="75" y="306" width="1" height="1"/><rect x="150" y="306" width="1" height="1"/><rect x="210" y="306" width="1" height="1"/><rect x="237" y="306" width="1" height="1"/><rect x="290" y="306" width="1" height="1"/><rect x="75" y="307" width="1" height="1"/><rect x="79" y="307" width="1" height="1"/><rect x="88" y="307" width="1" height="1"/><rect x="112" y="307" width="1" height="1"/><rect x="166" y="307" width="1" height="1"/><rect x="180" y="307" width="1" height="1"/><rect x="301" y="307" width="1" height="1"/><rect x="50" y="308" width="1" height="1"/><rect x="88" y="308" width="1" height="1"/><rect x="157" y="308" width="1" height="1"/><rect x="191" y="308" width="1" height="1"/><rect x="212" y="308" width="1" height="1"/><rect x="225" y="308" width="1" height="1"/><rect x="226" y="308" width="1" height="1"/><rect x="248" y="308" width="1" height="1"/><rect x="294" y="308" width="1" height="1"/><rect x="49" y="309" width="1" height="1"/><rect x="112" y="309" width="1" height="1"/><rect x="124" y="309" width="1" height="1"/><rect x="129" y="309" width="1" height="1"/><rect x="138" y="309" width="1" height="1"/><rect x="149" y="309" width="1" height="1"/><rect x="151" y="309" width="1" height="1"/><rect x="178" y="309" width="1" height="1"/><rect x="202" y="309" width="1" height="1"/><rect x="304" y="309" width="1" height="1"/><rect x="49" y="310" width="1" height="1"/><rect x="58" y="310" width="1" height="1"/><rect x="61" y="310" width="1" height="1"/><rect x="78" y="310" width="1" height="1"/><rect x="85" y="310" width="1" height="1"/><rect x="158" y="310" width="1" height="1"/><rect x="172" y="310" width="1" height="1"/><rect x="195" y="310" width="1" height="1"/><rect x="53" y="311" width="1" height="1"/><rect x="54" y="311" width="1" height="1"/><rect x="100" y="311" width="1" height="1"/><rect x="139" y="311" width="1" height="1"/><rect x="221" y="311" width="1" height="1"/><rect x="240" y="311" width="1" height="1"/><rect x="56" y="312" width="1" height="1"/><rect x="91" y="312" width="1" height="1"/><rect x="152" y="312" width="1" height="1"/><rect x="195" y="312" width="1" height="1"/><rect x="227" y="312" width="1" height="1"/><rect x="49" y="313" width="1" height="1"/><rect x="68" y="313" width="1" height="1"/><rect x="211" y="313" width="1" height="1"/><rect x="290" y="313" width="1" height="1"/><rect x="69" y="314" width="1" height="1"/><rect x="109" y="314" width="1" height="1"/><rect x="121" y="314" width="1" height="1"/><rect x="157" y="314" width="1" height="1"/><rect x="159" y="314" width="1" height="1"/><rect x="168" y="314" width="1" height="1"/><rect x="180" y="314" width="1" height="1"/><rect x="196" y="314" width="1" height="1"/><rect x="230" y="314" width="1" height="1"/><rect x="261" y="314" width="1" height="1"/><rect x="282" y="314" width="1" height="1"/><rect x="301" y="314" width="1" height="1"/><rect x="50" y="315" width="1" height="1"/><rect x="54" y="315" width="1" height="1"/><rect x="73" y="315" width="1" height="1"/><rect x="111" y="315" width="1" height="1"/><rect x="114" y="315" width="1" height="1"/><rect x="127" y="315" width="1" height="1"/><rect x="148" y="315" width="1" height="1"/><rect x="150" y="315" width="1" height="1"/><rect x="171" y="315" width="1" height="1"/><rect x="181" y="315" width="1" height="1"/><rect x="187" y="315" width="1" height="1"/><rect x="190" y="315" width="1" height="1"/><rect x="204" y="315" width="1" height="1"/><rect x="220" y="315" width="1" height="1"/><rect x="231" y="315" width="1" height="1"/><rect x="270" y="315" width="1" height="1"/><rect x="50" y="316" width="1" height="1"/><rect x="143" y="316" width="1" height="1"/><rect x="145" y="316" width="1" height="1"/><rect x="151" y="316" width="1" height="1"/><rect x="202" y="316" width="1" height="1"/><rect x="232" y="316" width="1" height="1"/><rect x="247" y="316" width="1" height="1"/><rect x="258" y="316" width="1" height="1"/><rect x="92" y="317" width="1" height="1"/><rect x="94" y="317" width="1" height="1"/><rect x="173" y="317" width="1" height="1"/><rect x="184" y="317" width="1" height="1"/><rect x="192" y="317" width="1" height="1"/><rect x="227" y="317" width="1" height="1"/><rect x="52" y="318" width="1" height="1"/><rect x="54" y="318" width="1" height="1"/><rect x="76" y="318" width="1" height="1"/><rect x="124" y="318" width="1" height="1"/><rect x="145" y="318" width="1" height="1"/><rect x="150" y="318" width="1" height="1"/><rect x="151" y="318" width="1" height="1"/><rect x="178" y="318" width="1" height="1"/><rect x="215" y="318" width="1" height="1"/><rect x="216" y="318" width="1" height="1"/><rect x="237" y="318" width="1" height="1"/><rect x="256" y="318" width="1" height="1"/><rect x="278" y="318" width="1" height="1"/><rect x="285" y="318" width="1" height="1"/><rect x="129" y="319" width="1" height="1"/><rect x="159" y="319" width="1" height="1"/><rect x="181" y="319" width="1" height="1"/><rect x="183" y="319" width="1" height="1"/><rect x="225" y="319" width="1" height="1"/><rect x="227" y="319" width="1" height="1"/><rect x="331" y="319" width="1" height="1"/><rect x="74" y="320" width="1" height="1"/><rect x="82" y="320" width="1" height="1"/><rect x="118" y="320" width="1" height="1"/><rect x="122" y="320" width="1" height="1"/><rect x="168" y="320" width="1" height="1"/><rect x="174" y="320" width="1" height="1"/><rect x="224" y="320" width="1" height="1"/><rect x="227" y="320" width="1" height="1"/><rect x="247" y="320" width="1" height="1"/><rect x="55" y="321" width="1" height="1"/><rect x="66" y="321" width="1" height="1"/><rect x="86" y="321" width="1" height="1"/><rect x="96" y="321" width="1" height="1"/><rect x="114" y="321" width="1" height="1"/><rect x="125" y="321" width="1" height="1"/><rect x="134" y="321" width="1" height="1"/><rect x="170" y="321" width="1" height="1"/><rect x="227" y="321" width="1" height="1"/><rect x="234" y="321" width="1" height="1"/><rect x="49" y="322" width="1" height="1"/><rect x="59" y="322" width="1" height="1"/><rect x="60" y="322" width="1" height="1"/><rect x="62" y="322" width="1" height="1"/><rect x="101" y="322" width="1" height="1"/><rect x="199" y="322" width="1" height="1"/><rect x="293" y="322" width="1" height="1"/><rect x="119" y="323" width="1" height="1"/><rect x="122" y="323" width="1" height="1"/><rect x="156" y="323" width="1" height="1"/><rect x="162" y="323" width="1" height="1"/><rect x="164" y="323" width="1" height="1"/><rect x="179" y="323" width="1" height="1"/><rect x="191" y="323" width="1" height="1"/><rect x="219" y="323" width="1" height="1"/><rect x="260" y="323" width="1" height="1"/><rect x="77" y="324" width="1" height="1"/><rect x="79" y="324" width="1" height="1"/><rect x="94" y="324" width="1" height="1"/><rect x="107" y="324" width="1" height="1"/><rect x="120" y="324" width="1" height="1"/><rect x="136" y="324" width="1" height="1"/><rect x="157" y="324" width="1" height="1"/><rect x="174" y="324" width="1" height="1"/><rect x="196" y="324" width="1" height="1"/><rect x="307" y="324" width="1" height="1"/><rect x="326" y="324" width="1" height="1"/><rect x="52" y="325" width="1" height="1"/><rect x="63" y="325" width="1" height="1"/><rect x="67" y="325" width="1" height="1"/><rect x="82" y="325" width="1" height="1"/><rect x="121" y="325" width="1" height="1"/><rect x="146" y="325" width="1" height="1"/><rect x="147" y="325" width="1" height="1"/><rect x="162" y="325" width="1" height="1"/><rect x="217" y="325" width="1" height="1"/><rect x="232" y="325" width="1" height="1"/><rect x="301" y="325" width="1" height="1"/><rect x="50" y="326" width="1" height="1"/><rect x="97" y="326" width="1" height="1"/><rect x="102" y="326" width="1" height="1"/><rect x="122" y="326" width="1" height="1"/><rect x="141" y="326" width="1" height="1"/><rect x="156" y="326" width="1" height="1"/><rect x="196" y="326" width="1" height="1"/><rect x="218" y="326" width="1" height="1"/><rect x="220" y="326" width="1" height="1"/><rect x="230" y="326" width="1" height="1"/><rect x="293" y="326" width="1" height="1"/><rect x="310" y="326" width="1" height="1"/><rect x="51" y="327" width="1" height="1"/><rect x="135" y="327" width="1" height="1"/><rect x="136" y="327" width="1" height="1"/><rect x="159" y="327" width="1" height="1"/><rect x="166" y="327" width="1" height="1"/><rect x="172" y="327" width="1" height="1"/><rect x="181" y="327" width="1" height="1"/><rect x="184" y="327" width="1" height="1"/><rect x="220" y="327" width="1" height="1"/><rect x="278" y="327" width="1" height="1"/><rect x="67" y="328" width="1" height="1"/><rect x="72" y="328" width="1" height="1"/><rect x="78" y="328" width="1" height="1"/><rect x="124" y="328" width="1" height="1"/><rect x="130" y="328" width="1" height="1"/><rect x="166" y="328" width="1" height="1"/><rect x="171" y="328" width="1" height="1"/><rect x="219" y="328" width="1" height="1"/><rect x="73" y="329" width="1" height="1"/><rect x="81" y="329" width="1" height="1"/><rect x="82" y="329" width="1" height="1"/><rect x="87" y="329" width="1" height="1"/><rect x="97" y="329" width="1" height="1"/><rect x="98" y="329" width="1" height="1"/><rect x="104" y="329" width="1" height="1"/><rect x="112" y="329" width="1" height="1"/><rect x="119" y="329" width="1" height="1"/><rect x="129" y="329" width="1" height="1"/><rect x="191" y="329" width="1" height="1"/><rect x="225" y="329" width="1" height="1"/><rect x="259" y="329" width="1" height="1"/><rect x="325" y="329" width="1" height="1"/><rect x="74" y="330" width="1" height="1"/><rect x="110" y="330" width="1" height="1"/><rect x="143" y="330" width="1" height="1"/><rect x="162" y="330" width="1" height="1"/><rect x="177" y="330" width="1" height="1"/><rect x="178" y="330" width="1" height="1"/><rect x="183" y="330" width="1" height="1"/><rect x="204" y="330" width="1" height="1"/><rect x="207" y="330" width="1" height="1"/><rect x="235" y="330" width="1" height="1"/><rect x="255" y="330" width="1" height="1"/><rect x="297" y="330" width="1" height="1"/><rect x="317" y="330" width="1" height="1"/><rect x="48" y="331" width="1" height="1"/><rect x="53" y="331" width="1" height="1"/><rect x="64" y="331" width="1" height="1"/><rect x="85" y="331" width="1" height="1"/><rect x="119" y="331" width="1" height="1"/><rect x="120" y="331" width="1" height="1"/><rect x="135" y="331" width="1" height="1"/><rect x="140" y="331" width="1" height="1"/><rect x="175" y="331" width="1" height="1"/><rect x="195" y="331" width="1" height="1"/><rect x="199" y="331" width="1" height="1"/><rect x="219" y="331" width="1" height="1"/><rect x="318" y="331" width="1" height="1"/><rect x="55" y="332" width="1" height="1"/><rect x="65" y="332" width="1" height="1"/><rect x="70" y="332" width="1" height="1"/><rect x="124" y="332" width="1" height="1"/><rect x="140" y="332" width="1" height="1"/><rect x="161" y="332" width="1" height="1"/><rect x="183" y="332" width="1" height="1"/><rect x="243" y="332" width="1" height="1"/><rect x="70" y="333" width="1" height="1"/><rect x="81" y="333" width="1" height="1"/><rect x="97" y="333" width="1" height="1"/><rect x="138" y="333" width="1" height="1"/><rect x="143" y="333" width="1" height="1"/><rect x="154" y="333" width="1" height="1"/><rect x="156" y="333" width="1" height="1"/><rect x="182" y="333" width="1" height="1"/><rect x="205" y="333" width="1" height="1"/><rect x="219" y="333" width="1" height="1"/><rect x="224" y="333" width="1" height="1"/><rect x="50" y="334" width="1" height="1"/><rect x="68" y="334" width="1" height="1"/><rect x="73" y="334" width="1" height="1"/><rect x="145" y="334" width="1" height="1"/><rect x="181" y="334" width="1" height="1"/><rect x="199" y="334" width="1" height="1"/><rect x="223" y="334" width="1" height="1"/><rect x="270" y="334" width="1" height="1"/><rect x="285" y="334" width="1" height="1"/><rect x="53" y="335" width="1" height="1"/><rect x="77" y="335" width="1" height="1"/><rect x="226" y="335" width="1" height="1"/><rect x="242" y="335" width="1" height="1"/><rect x="251" y="335" width="1" height="1"/><rect x="282" y="335" width="1" height="1"/><rect x="74" y="336" width="1" height="1"/><rect x="76" y="336" width="1" height="1"/><rect x="79" y="336" width="1" height="1"/><rect x="89" y="336" width="1" height="1"/><rect x="120" y="336" width="1" height="1"/><rect x="178" y="336" width="1" height="1"/><rect x="53" y="337" width="1" height="1"/><rect x="82" y="337" width="1" height="1"/><rect x="83" y="337" width="1" height="1"/><rect x="101" y="337" width="1" height="1"/><rect x="221" y="337" width="1" height="1"/><rect x="79" y="338" width="1" height="1"/><rect x="116" y="338" width="1" height="1"/><rect x="117" y="338" width="1" height="1"/><rect x="151" y="338" width="1" height="1"/><rect x="246" y="338" width="1" height="1"/><rect x="266" y="338" width="1" height="1"/><rect x="91" y="340" width="1" height="1"/><rect x="94" y="340" width="1" height="1"/><rect x="106" y="340" width="1" height="1"/><rect x="131" y="340" width="1" height="1"/><rect x="138" y="340" width="1" height="1"/><rect x="230" y="340" width="1" height="1"/><rect x="53" y="341" width="1" height="1"/><rect x="234" y="344" width="1" height="1"/><rect x="108" y="347" width="1" height="1"/><rect x="223" y="348" width="1" height="1"/><rect x="85" y="349" width="1" height="1"/><rect x="193" y="350" width="1" height="1"/><rect x="269" y="351" width="1" height="1"/><rect x="121" y="355" width="1" height="1"/><rect x="193" y="358" width="1" height="1"/><rect x="217" y="361" width="1" height="1"/><rect x="99" y="362" width="1" height="1"/><rect x="236" y="362" width="1" height="1"/><rect x="147" y="363" width="1" height="1"/><rect x="123" y="366" width="1" height="1"/><rect x="142" y="366" width="1" height="1"/><rect x="53" y="367" width="1" height="1"/><rect x="67" y="367" width="1" height="1"/><rect x="81" y="368" width="1" height="1"/><rect x="106" y="370" width="1" height="1"/><rect x="185" y="371" width="1" height="1"/><rect x="304" y="371" width="1" height="1"/><rect x="167" y="374" width="1" height="1"/><rect x="247" y="374" width="1" height="1"/><rect x="62" y="376" width="1" height="1"/></g><polyline fill="none" stroke="#5AB0E0" stroke-width="1" shape-rendering="optimizeSpeed" points="47.8,175.0 48.9,169.1 50.8,161.4 52.8,158.1 55.4,155.5 57.3,169.1 59.9,161.4 61.8,158.1 64.4,156.2 66.4,164.0 68.3,151.0 70.3,157.5 72.9,164.0 75.4,160.1 78.7,164.0 82.6,158.1 86.5,161.4 90.3,164.6 94.2,161.4 98.1,159.4 100.0,157.5 102.0,151.7 103.9,158.1 106.5,156.8 109.8,162.7 113.0,165.3 115.6,153.0 116.9,151.7 118.8,165.9 120.8,161.4 123.2,165.3 125.2,158.8 126.5,167.2 127.8,186.0 129.7,170.4 131.7,173.0 134.2,171.1 136.2,174.3 138.8,184.7 141.4,172.4 143.3,164.6 145.9,176.3 147.8,175.6 149.8,156.8 151.7,168.5 153.7,165.9 155.6,167.8 158.2,160.1 160.8,160.7 163.4,171.1 166.6,175.6 169.2,172.4 171.8,175.6 173.8,165.9 176.3,176.3 178.9,177.6 181.5,162.7 183.5,169.1 186.1,175.6 188.7,177.6 191.2,172.4 193.8,171.7 195.1,178.9 195.5,290.0 196.5,360.0 197.0,377.0 198.0,355.0 198.5,290.0 198.5,180.0 201.0,178.9 202.6,178.5 205.2,175.3 207.1,168.8 209.1,165.5 211.0,171.4 213.0,181.1 214.9,170.7 216.2,166.8 218.1,180.4 220.1,174.6 222.7,176.6 225.3,178.5 227.2,182.4 229.1,187.6 231.7,177.8 233.7,183.7 235.0,184.3 236.3,192.7 238.9,177.8 240.8,188.2 243.4,185.0 246.0,183.0 248.6,181.1 251.2,183.0 253.1,188.9 255.7,186.3 258.9,181.7 261.5,185.6 263.5,190.2 265.4,186.3 268.0,182.4 270.6,188.2 272.5,188.9 275.1,186.9 277.7,188.2 280.3,190.2 282.6,190.7 285.8,185.5 287.8,189.4 290.4,198.5 293.0,187.5 295.5,189.4 299.4,200.4 303.3,188.1 305.9,195.3 307.8,201.7 310.4,190.7 313.0,198.5 316.3,199.1 318.9,197.2 322.1,198.5 325.3,198.5 327.9,208.2 329.9,201.7 332.5,196.6 335.1,206.9 337.6,208.2 340.2,207.6 342.8,205.0 345.4,207.6 348.0,212.7 350.6,219.2 353.8,210.8 356.4,213.4 359.0,214.0 361.2,211.2 364.0,216.8 366.1,211.2 367.5,218.2 369.7,223.9 371.1,215.4 373.9,210.5 376.7,212.6 378.8,214.0 382.4,216.8 386.6,226.7 392.3,217.5 395.8,235.2 397.9,223.9 400.0,232.4 402.9,225.3 406.4,228.8 409.2,231.0 411.3,227.4 414.2,235.9 416.3,231.0 419.1,230.3 421.3,232.0 424.8,244.7 427.7,236.2 429.8,239.0 432.6,238.3 434.7,235.5 436.8,240.4 439.7,248.2 442.5,234.1 444.6,245.4 447.4,240.4 448.8,246.1 451.0,251.7 453.1,248.2 456.6,248.2 459.4,242.5 462.3,246.8 465.1,248.2 469.3,259.5 472.1,256.0 473.6,260.2 475.7,251.7 477.8,260.9 479.5,260.9"/></svg><div class="t" style="left:0;width:42px;text-align:right;top:112px;line-height:13px">800</div><div class="t" style="left:0;width:42px;text-align:right;top:144px;line-height:13px">700</div><div class="t" style="left:0;width:42px;text-align:right;top:177px;line-height:13px">600</div><div class="t" style="left:0;width:42px;text-align:right;top:209px;line-height:13px">500</div><div class="t" style="left:0;width:42px;text-align:right;top:242px;line-height:13px">400</div><div class="t" style="left:0;width:42px;text-align:right;top:274px;line-height:13px">300</div><div class="t" style="left:0;width:42px;text-align:right;top:307px;line-height:13px">200</div><div class="t" style="left:0;width:42px;text-align:right;top:339px;line-height:13px">100</div><div class="t" style="left:485px;top:112px;line-height:13px">40</div><div class="t" style="left:485px;top:144px;line-height:13px">35</div><div class="t" style="left:485px;top:177px;line-height:13px">30</div><div class="t" style="left:485px;top:209px;line-height:13px">25</div><div class="t" style="left:485px;top:242px;line-height:13px">20</div><div class="t" style="left:485px;top:274px;line-height:13px">15</div><div class="t" style="left:485px;top:307px;line-height:13px">10</div><div class="t" style="left:485px;top:339px;line-height:13px">5</div><div class="t" style="left:47px;top:105px;line-height:13px">MB/sec</div><div class="t" style="left:439px;width:40px;text-align:right;top:105px;line-height:13px">ms</div><div class="t" style="left:17px;width:61px;text-align:center;top:379px;line-height:13px">0</div><div class="t" style="left:60px;width:61px;text-align:center;top:379px;line-height:13px">10</div><div class="t" style="left:103px;width:61px;text-align:center;top:379px;line-height:13px">20</div><div class="t" style="left:146px;width:61px;text-align:center;top:379px;line-height:13px">30</div><div class="t" style="left:190px;width:61px;text-align:center;top:379px;line-height:13px">40</div><div class="t" style="left:233px;width:61px;text-align:center;top:379px;line-height:13px">50</div><div class="t" style="left:276px;width:61px;text-align:center;top:379px;line-height:13px">60</div><div class="t" style="left:320px;width:61px;text-align:center;top:379px;line-height:13px">70</div><div class="t" style="left:363px;width:61px;text-align:center;top:379px;line-height:13px">80</div><div class="t" style="left:406px;width:61px;text-align:center;top:379px;line-height:13px">90</div><div class="t" style="left:450px;width:61px;text-align:center;top:379px;line-height:13px">100%</div><div style="position:absolute;left:532px;top:98px;width:88px;height:21px;background:#D4D0C8;box-sizing:border-box;border-top:1px solid #fff;border-left:1px solid #fff;border-right:1px solid #404040;border-bottom:1px solid #404040"><div style="position:absolute;left:0;top:0;right:0;bottom:0;border-right:1px solid #808080;border-bottom:1px solid #808080"></div></div><div class="t" style="left:532px;width:88px;text-align:center;top:102px;line-height:13px;letter-spacing:0.5px">Start</div><div style="position:absolute;left:511px;top:137px;width:129px;height:118px;background:transparent;box-sizing:border-box;border:1px solid #808080"></div><div style="position:absolute;left:512px;top:138px;width:129px;height:118px;background:transparent;box-sizing:border-box;border:1px solid #fff"></div><div style="position:absolute;left:518px;top:130px;width:74px;height:14px;background:#D4D0C8;"></div><div class="t" style="left:520px;top:131px;line-height:13px;letter-spacing:0.2px">Transfer Rate</div><div class="t" style="left:520px;top:148px;line-height:13px">Minimum</div><div style="position:absolute;left:520px;top:164px;width:109px;height:15px;background:#000;box-sizing:border-box;border-top:1px solid #404040;border-left:1px solid #404040;border-right:1px solid #fff;border-bottom:1px solid #fff"></div><div class="t" style="left:520px;width:109px;text-align:center;top:164px;line-height:14px;font-weight:bold;font-size:12px;letter-spacing:0.7px;color:#50B8E8">5.7 MB/sec</div><div class="t" style="left:520px;top:181px;line-height:13px">Maximum</div><div style="position:absolute;left:520px;top:197px;width:109px;height:15px;background:#000;box-sizing:border-box;border-top:1px solid #404040;border-left:1px solid #404040;border-right:1px solid #fff;border-bottom:1px solid #fff"></div><div class="t" style="left:520px;width:109px;text-align:center;top:197px;line-height:14px;font-weight:bold;font-size:12px;letter-spacing:0.7px;color:#50B8E8">699.7 MB/sec</div><div class="t" style="left:520px;top:214px;line-height:13px">Average:</div><div style="position:absolute;left:520px;top:230px;width:109px;height:15px;background:#000;box-sizing:border-box;border-top:1px solid #404040;border-left:1px solid #404040;border-right:1px solid #fff;border-bottom:1px solid #fff"></div><div class="t" style="left:520px;width:109px;text-align:center;top:230px;line-height:14px;font-weight:bold;font-size:12px;letter-spacing:0.7px;color:#50B8E8">560.6 MB/sec</div><div class="t" style="left:520px;top:263px;line-height:13px">Access Time:</div><div style="position:absolute;left:520px;top:280px;width:109px;height:15px;background:#000;box-sizing:border-box;border-top:1px solid #404040;border-left:1px solid #404040;border-right:1px solid #fff;border-bottom:1px solid #fff"></div><div class="t" style="left:520px;width:109px;text-align:center;top:280px;line-height:14px;font-weight:bold;font-size:12px;letter-spacing:0.7px;color:#FFFF80">15.7 ms</div><div class="t" style="left:520px;top:308px;line-height:13px">Burst Rate</div><div style="position:absolute;left:520px;top:325px;width:109px;height:15px;background:#000;box-sizing:border-box;border-top:1px solid #404040;border-left:1px solid #404040;border-right:1px solid #fff;border-bottom:1px solid #fff"></div><div class="t" style="left:520px;width:109px;text-align:center;top:325px;line-height:14px;font-weight:bold;font-size:12px;letter-spacing:0.7px;color:#fff">468.2 MB/sec</div><div class="t" style="left:520px;top:350px;line-height:13px">CPU Usage</div><div style="position:absolute;left:520px;top:367px;width:109px;height:15px;background:#000;box-sizing:border-box;border-top:1px solid #404040;border-left:1px solid #404040;border-right:1px solid #fff;border-bottom:1px solid #fff"></div><div class="t" style="left:520px;width:109px;text-align:center;top:367px;line-height:14px;font-weight:bold;font-size:12px;letter-spacing:0.7px;color:#fff">4.6%</div>
</body></html>
